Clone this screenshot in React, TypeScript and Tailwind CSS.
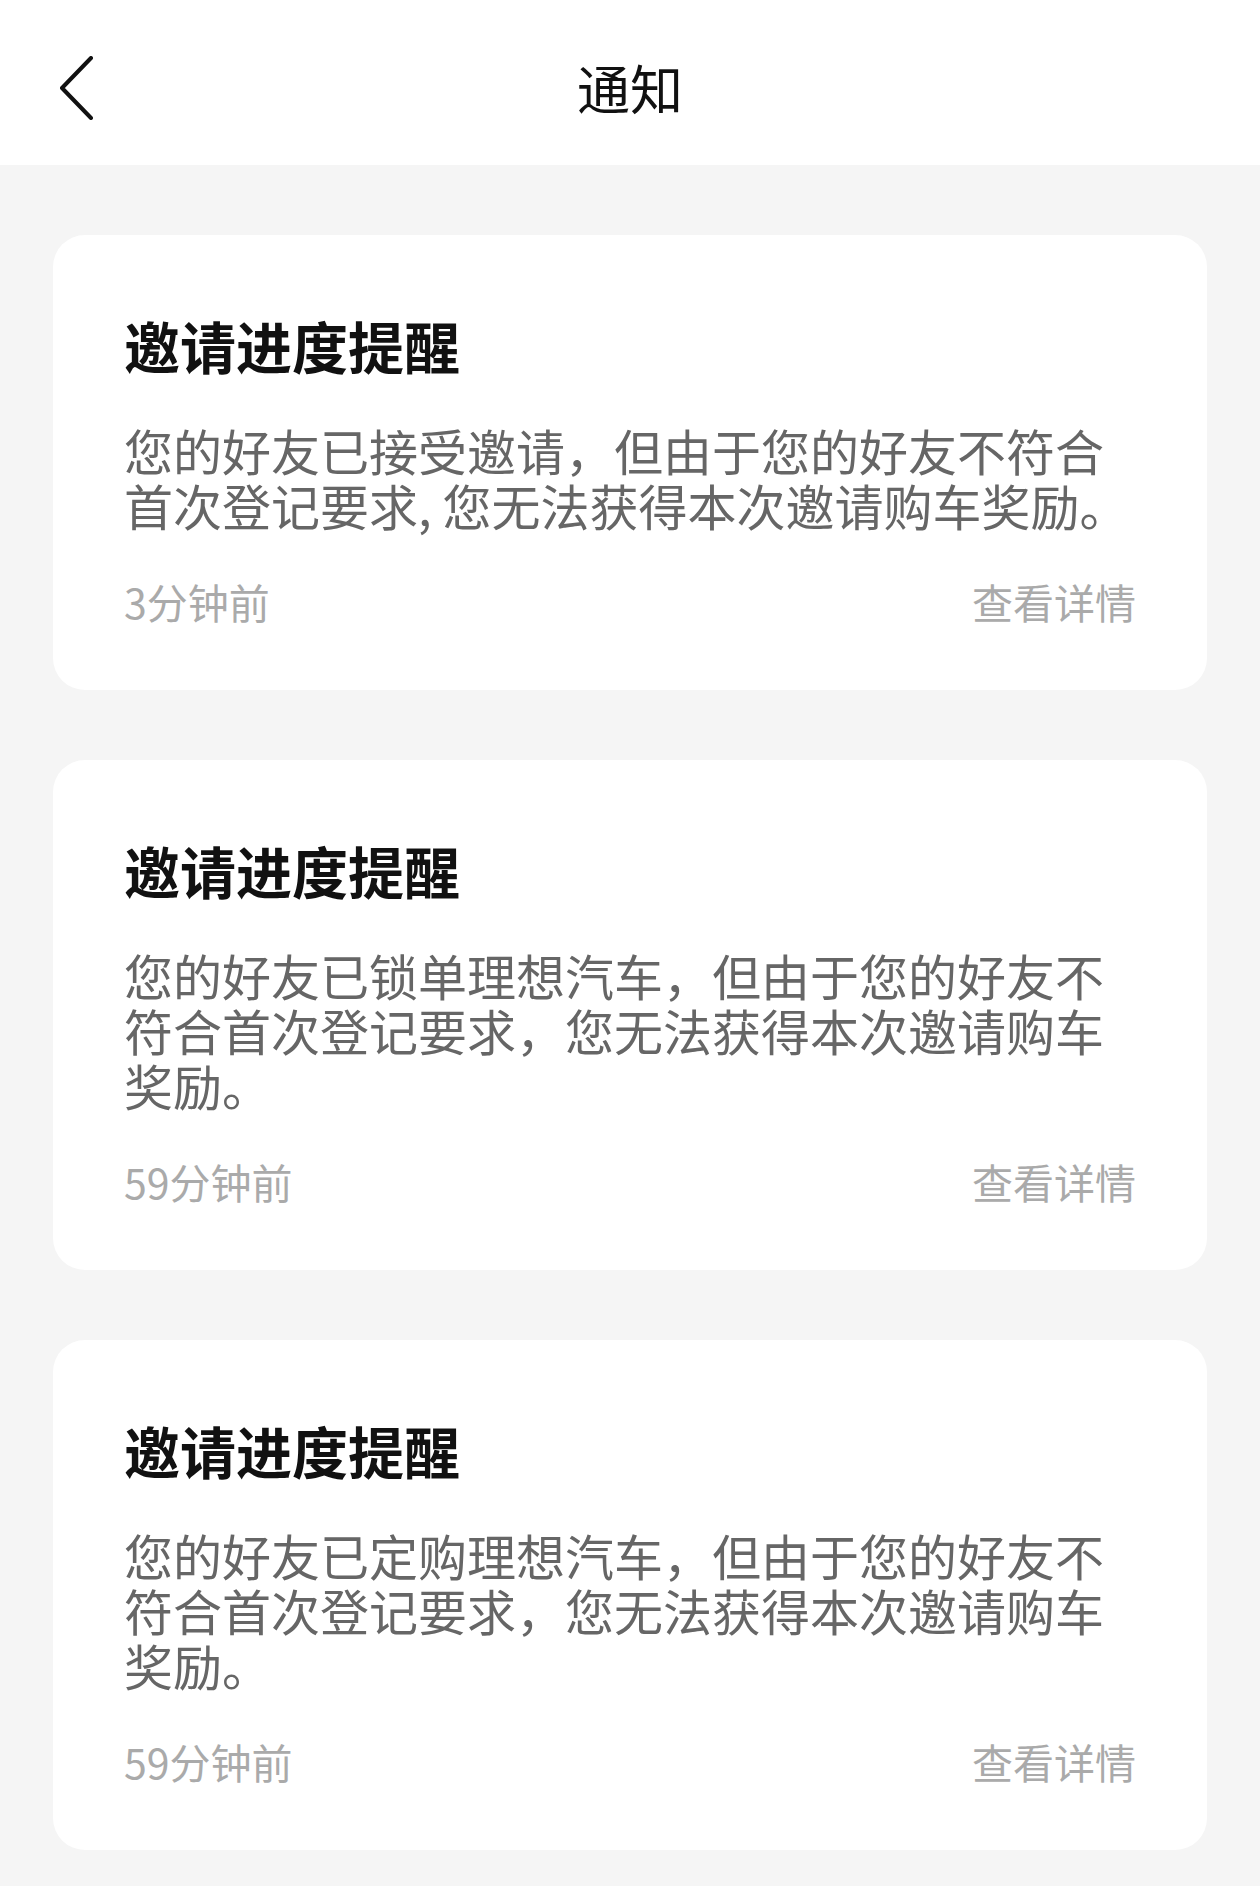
const notices = [
  {
    title: "邀请进度提醒",
    body: "您的好友已接受邀请，但由于您的好友不符合首次登记要求, 您无法获得本次邀请购车奖励。",
    time: "3分钟前",
  },
  {
    title: "邀请进度提醒",
    body: "您的好友已锁单理想汽车，但由于您的好友不符合首次登记要求，您无法获得本次邀请购车奖励。",
    time: "59分钟前",
  },
  {
    title: "邀请进度提醒",
    body: "您的好友已定购理想汽车，但由于您的好友不符合首次登记要求，您无法获得本次邀请购车奖励。",
    time: "59分钟前",
  },
];

const font = "font-['Noto_Sans_CJK_SC','Noto_Sans',sans-serif]";

const BackIcon = () => (
  <svg width="40" height="64" viewBox="0 0 40 64" fill="none" className="absolute left-[56px] top-[56px]">
    <path d="M35 2 L6 32 L35 62" stroke="#111" strokeWidth="4" strokeLinecap="round" strokeLinejoin="round" />
  </svg>
);

const NoticeCard = ({ title, body, time }: { title: string; body: string; time: string }) => (
  <div className="bg-white rounded-[32px] pt-[82px] pb-[68px] px-[71px]">
    <div className="text-[56px] leading-[56px] font-bold text-[#111]">{title}</div>
    <p className="mt-[49px] text-[49px] leading-[55px] text-[#666]">{body}</p>
    <div className="mt-[49px] flex items-center justify-between text-[41px] leading-[41px] text-[#aaa]">
      <span>{time}</span>
      <span>查看详情</span>
    </div>
  </div>
);

export default function App() {
  return (
    <div className={`${font} w-[1260px] min-h-[1886px] bg-[#f5f5f5]`}>
      {/* Top bar */}
      <div className="relative h-[165px] bg-white flex items-center justify-center pt-[10px]">
        <BackIcon />
        <span className="text-[53px] leading-none text-[#111]">通知</span>
      </div>

      <div className="flex flex-col gap-[70px] px-[53px] pt-[70px] pb-[34px]">
        {notices.map((n, i) => (
          <NoticeCard key={i} {...n} />
        ))}
      </div>
    </div>
  );
}
